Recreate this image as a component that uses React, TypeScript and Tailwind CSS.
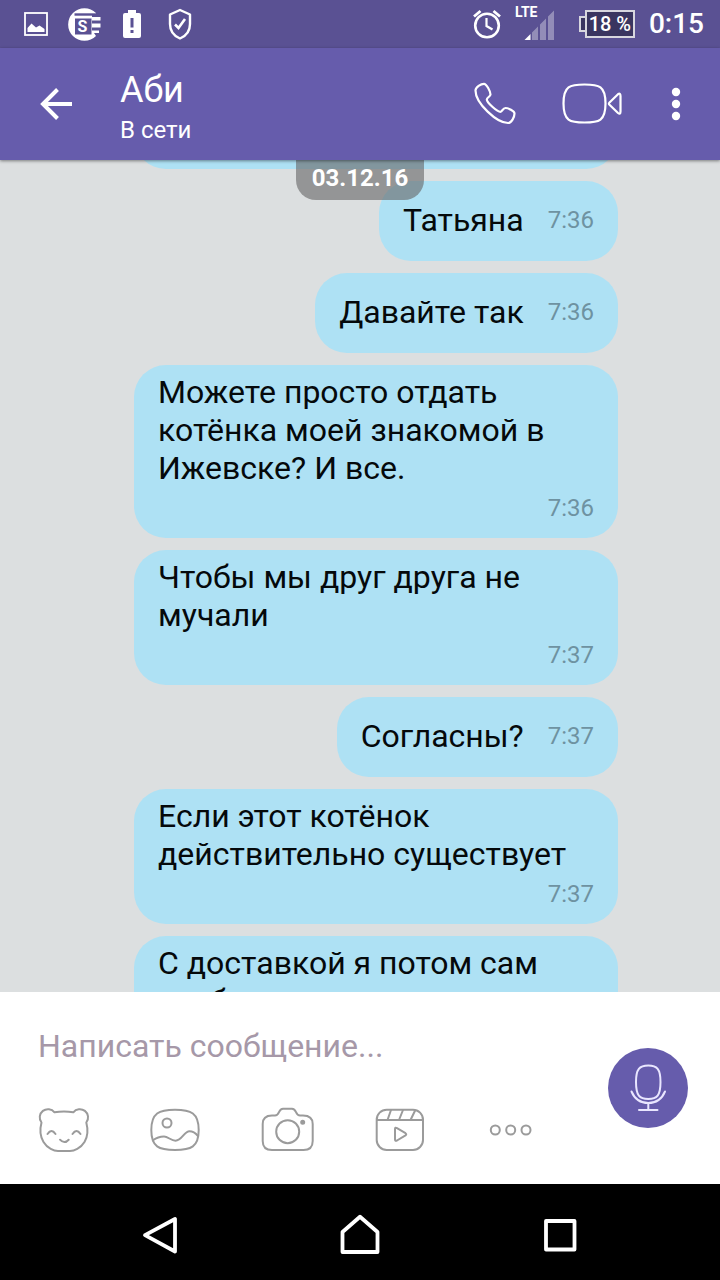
import type { ReactNode } from 'react'

type Message = {
  text: string
  time: string
  long?: boolean
}

const messages: Message[] = [
  { text: 'Татьяна', time: '7:36' },
  { text: 'Давайте так', time: '7:36' },
  { text: 'Можете просто отдать котёнка моей знакомой в Ижевске? И все.', time: '7:36', long: true },
  { text: 'Чтобы мы друг друга не мучали', time: '7:37', long: true },
  { text: 'Согласны?', time: '7:37' },
  { text: 'Если этот котёнок действительно существует', time: '7:37', long: true },
  { text: 'С доставкой я потом сам разберусь', time: '7:37', long: true },
]

function StatusBar() {
  return (
    <div className="flex h-12 shrink-0 items-center justify-between bg-[#5a5193] pr-4 pl-6 text-white">
      <div className="flex items-center">
        <svg className="h-12 w-6" viewBox="0 0 24 48" aria-hidden="true">
          <rect x="1" y="13" width="22" height="22" fill="none" stroke="currentColor" strokeWidth="1.8" />
          <path d="M3.5 32V28L7.5 23.5L12 27.5L15.5 25.5L20.5 29V32Z" fill="currentColor" />
        </svg>
        <svg className="ml-5 h-12 w-8 overflow-visible" viewBox="0 0 32 48" aria-hidden="true">
          <path d="M28 13A16.3 16.3 0 1 0 28 36L26 33H31V30.5H24V27.5H32.5V23.5H24V20.500H32.5V17H24V14H28Z" fill="currentColor" />
          <path d="M6.5 14.5H31" stroke="#5a5193" strokeWidth="2.4" />
          <rect x="7" y="18.5" width="16.5" height="16" fill="#5a5193" />
          <text x="14.5" y="32" textAnchor="middle" fill="currentColor" fontFamily="Roboto, sans-serif" fontSize="16" fontWeight="700">
            S
          </text>
        </svg>
        <svg className="ml-6 h-12 w-4 overflow-visible" viewBox="0 0 16 48" aria-hidden="true">
          <path d="M4 10H12V13H15Q17 13 17 15V36Q17 38 15 38H1Q-1 38-1 36V15Q-1 13 1 13H4Z" fill="currentColor" />
          <path d="M8 18V27.5M8 30V33" stroke="#5a5193" strokeWidth="3" />
        </svg>
        <svg className="ml-7 h-12 w-6" viewBox="0 0 24 48" fill="none" stroke="currentColor" aria-hidden="true">
          <path d="M12 10L22 14.5V24C22 31 18 36 12 38.5C6 36 2 31 2 24V14.5Z" strokeWidth="2.4" strokeLinejoin="round" />
          <path d="M7 24.5L10.5 28L17 19" strokeWidth="2.6" />
        </svg>
      </div>

      <div className="flex items-center">
        <svg className="h-12 w-8" viewBox="0 0 32 48" fill="none" stroke="currentColor" aria-hidden="true">
          <circle cx="16" cy="25.5" r="11.8" strokeWidth="2.6" />
          <path d="M15.5 18V26L21.5 29.5" strokeWidth="2.2" />
          <path d="M3 16.5L9.5 11M29 16.5L22.5 11" strokeWidth="2.8" />
        </svg>
        <div className="relative ml-3 h-12 w-10">
          <span className="absolute top-1 left-0 text-[14px] leading-4 font-bold">LTE</span>
          <svg className="h-12 w-10" viewBox="0 0 40 48" fill="currentColor" aria-hidden="true">
            <path d="M9.5 40L15.5 34V40Z" />
            <path d="M17 40V32.5L23 26.5V40ZM25 40V24.5L31 18.5V40ZM33 40V16.5L39 10.5V40Z" opacity="0.35" />
          </svg>
        </div>
        <div className="ml-6 flex items-center">
          <span className="-mr-0.5 h-4 w-2 border-2 border-r-0 border-white/80 bg-[#3a3560]" />
          <span className="flex h-7 w-[50px] items-center justify-center border-2 border-white/80 bg-[#3a3560] text-[20px] leading-6 font-medium whitespace-nowrap">
            18 %
          </span>
        </div>
        <span className="ml-3.5 text-[28px] leading-8 font-medium">0:15</span>
      </div>
    </div>
  )
}

function ChatHeader() {
  return (
    <header className="z-10 flex h-28 shrink-0 items-center bg-[#665cac] pr-7 pl-8 text-white shadow-[0_1px_3px_rgba(0,0,0,0.45)]">
      <button type="button" aria-label="Назад" className="size-12">
        <svg className="size-12" viewBox="0 0 48 48" fill="none" stroke="currentColor" strokeWidth="4" aria-hidden="true">
          <path d="M40 24H11M25.5 9.5L11 24L25.5 38.5" />
        </svg>
      </button>
      <div className="ml-10 min-w-0 flex-1 pt-3">
        <h1 className="text-[36px] leading-10">Аби</h1>
        <p className="text-[24px] leading-10">В сети</p>
      </div>
      <div className="flex items-center gap-9">
        <button type="button" aria-label="Позвонить" className="size-14">
          <svg className="size-14" viewBox="0 0 56 56" fill="none" stroke="currentColor" strokeWidth="2.2" strokeLinejoin="round" aria-hidden="true">
            <path d="M7.5 14.5C7.5 11 13 7.8 16 7.8C18.5 7.8 22.5 15.500 22.5 18.5C22.5 20.5 18.8 21.5 18.8 23.500C18.8 26.500 29 35.800 32.500 35.800C34.500 35.800 34.500 32 37.500 32C40 32 46.5 35 46.5 37.500C46.5 41 43.5 47 40 47C29 47 7.5 27.5 7.5 14.500Z" />
          </svg>
        </button>
        <button type="button" aria-label="Видеозвонок" className="h-14 w-16">
          <svg className="h-14 w-16" viewBox="0 0 64 56" fill="none" stroke="currentColor" strokeWidth="2.2" strokeLinejoin="round" aria-hidden="true">
            <path d="M24.5 8.5C39 8.5 45.5 10 45.5 27.5C45.5 45 39 46.5 24.5 46.5C10 46.5 3.5 45 3.5 27.5C3.5 10 10 8.5 24.5 8.5Z" />
            <path d="M49.5 26.5L58 18.2Q60.5 16.5 60.5 20V35.5Q60.5 39 58 37L49.5 28.8Q48.3 27.7 49.5 26.5Z" />
          </svg>
        </button>
        <button type="button" aria-label="Меню" className="h-14 w-8">
          <svg className="h-14 w-8" viewBox="0 0 32 56" fill="currentColor" aria-hidden="true">
            <circle cx="16" cy="16" r="4.2" />
            <circle cx="16" cy="28" r="4.2" />
            <circle cx="16" cy="40" r="4.2" />
          </svg>
        </button>
      </div>
    </header>
  )
}

function Bubble({ message }: { message: Message }) {
  if (message.long) {
    return (
      <li className="flex w-full flex-col rounded-[32px] bg-[#aee1f4] px-6 py-2">
        <p className="text-[32px] leading-[38px] text-[#05090b]">{message.text}</p>
        <time className="self-end text-[24px] leading-[43px] text-[#6e92a1]">{message.time}</time>
      </li>
    )
  }

  return (
    <li className="flex h-20 items-center gap-6 rounded-[32px] bg-[#aee1f4] px-6 pb-0.5">
      <p className="text-[32px] leading-[38px] text-[#05090b]">{message.text}</p>
      <time className="text-[24px] leading-[38px] text-[#6e92a1]">{message.time}</time>
    </li>
  )
}

function ToolButton({ label, children }: { label: string; children: ReactNode }) {
  return (
    <button type="button" aria-label={label} className="size-14">
      <svg
        className="size-14"
        viewBox="0 0 56 56"
        fill="none"
        stroke="currentColor"
        strokeWidth="2"
        strokeLinecap="round"
        strokeLinejoin="round"
        aria-hidden="true"
      >
        {children}
      </svg>
    </button>
  )
}

function Composer() {
  return (
    <form className="flex h-48 shrink-0 items-center justify-between bg-white pr-8 pl-9">
      <div className="min-w-0 flex-1">
        <input
          type="text"
          aria-label="Сообщение"
          placeholder="Написать сообщение..."
          className="h-14 w-full px-0.5 text-[32px] leading-10 text-black outline-none placeholder:text-[#a698a8]"
        />
        <div className="mt-7 flex gap-14 text-[#9b9b9b]">
          <ToolButton label="Стикеры">
            <path d="M5.500 20.500A8.200 8.200 0 1 1 18.500 10.300Q28 8.500 37.300 10.300A8.200 8.200 0 1 1 50.300 20.500C52.300 28 51.500 35 48.500 40C44.500 46.500 38 49 34 49H22C18 49 11.500 46.500 7.500 40C4.500 35 3.500 28 5.500 20.500Z" />
            <path d="M11.5 32Q15.5 26 19.5 32M36.5 32Q40.5 26 44.5 32M24 37.7Q28.3 42.5 32.7 37.7" />
          </ToolButton>
          <ToolButton label="Галерея">
            <path d="M27 7.7C43 7.7 50.7 11 50.7 28C50.7 45 43 48 27 48C11 48 3.3 45 3.3 28C3.3 11 11 7.7 27 7.7Z" />
            <circle cx="19" cy="21" r="4.5" />
            <path d="M5 38.3Q10 34.5 16 34.5C20 34.5 23 38.7 27.5 38.7C34 38.7 36 29.3 41.5 29.3Q46 29.3 50 34" />
          </ToolButton>
          <ToolButton label="Камера">
            <path d="M12 13.5H15C20 13.5 18 6.7 23 6.7H32C37 6.7 35 13.5 40 13.5H43Q52.7 13.5 52.7 22V39Q52.7 48 43.5 48H12Q2.7 48 2.7 39V22Q2.7 13.5 12 13.5Z" />
            <circle cx="27.7" cy="29.7" r="11.5" />
            <circle cx="42.7" cy="20.3" r="1.5" fill="currentColor" />
          </ToolButton>
          <ToolButton label="Видео">
            <rect x="4.7" y="7.7" width="46.3" height="40.3" rx="10" />
            <path d="M5 18H50.5M19 8L15.5 18M31 8L27 18M43 8.7L38.5 18" />
            <path d="M23 27Q23 25 25 26.2L33.5 31.2Q35 32.3 33.5 33.4L25 38.5Q23 39.5 23 37.5Z" />
          </ToolButton>
          <ToolButton label="Ещё">
            <circle cx="11.3" cy="28" r="4.5" />
            <circle cx="26.7" cy="28" r="4.5" />
            <circle cx="42" cy="28" r="4.5" />
          </ToolButton>
        </div>
      </div>
      <button type="button" aria-label="Голосовое сообщение" className="size-20 shrink-0 rounded-full bg-[#665cac] text-[#e9e6ff]">
        <svg className="size-20" viewBox="0 0 80 80" fill="none" stroke="currentColor" strokeWidth="2" strokeLinecap="round" aria-hidden="true">
          <path d="M40.3 17.5C49 17.5 52.5 21 52.5 34C52.5 47.5 49 51 40.3 51C31.5 51 28 47.5 28 34C28 21 31.5 17.5 40.3 17.5Z" />
          <path d="M23.5 43.5C27 52 33 55 40.3 55C47.5 55 53.5 52 57 43.5M40.3 55V62M31 62H49.5" />
        </svg>
      </button>
    </form>
  )
}

function SystemNav() {
  return (
    <nav className="flex h-24 shrink-0 items-center justify-center gap-36 bg-black text-white">
      <button type="button" aria-label="Назад" className="size-14">
        <svg className="size-14" viewBox="0 0 56 56" fill="none" stroke="currentColor" strokeWidth="3.8" strokeLinejoin="round" aria-hidden="true">
          <path d="M43 15V47.5L13 31.2Z" />
        </svg>
      </button>
      <button type="button" aria-label="Домой" className="size-14">
        <svg className="size-14" viewBox="0 0 56 56" fill="none" stroke="currentColor" strokeWidth="3.8" strokeLinejoin="round" aria-hidden="true">
          <path d="M28 12.7L45.5 28V48H10.5V28Z" />
        </svg>
      </button>
      <button type="button" aria-label="Недавние" className="size-14">
        <svg className="size-14" viewBox="0 0 56 56" fill="none" stroke="currentColor" strokeWidth="3.8" strokeLinejoin="round" aria-hidden="true">
          <rect x="14" y="17" width="28.5" height="28.5" />
        </svg>
      </button>
    </nav>
  )
}

export default function App() {
  return (
    <div className="flex h-screen flex-col overflow-hidden font-[Roboto,sans-serif]">
      <StatusBar />
      <ChatHeader />
      <main className="relative min-h-0 flex-1 overflow-hidden bg-[#dcdfe0]">
        <ul className="-mt-[71px] flex flex-col items-end gap-3 pr-[102px] pl-[134px]">
          {/* tail of the message scrolled under the header */}
          <li className="h-20 w-full shrink-0 rounded-[32px] bg-[#aee1f4]" />
          {messages.map((message) => (
            <Bubble key={message.text} message={message} />
          ))}
        </ul>
        <div className="absolute inset-x-0 top-0 flex justify-center">
          <span className="rounded-b-[20px] bg-[#646464]/60 px-4 pt-0.5 pb-1.5 text-[24px] leading-8 font-bold text-white">
            03.12.16
          </span>
        </div>
      </main>
      <Composer />
      <SystemNav />
    </div>
  )
}
